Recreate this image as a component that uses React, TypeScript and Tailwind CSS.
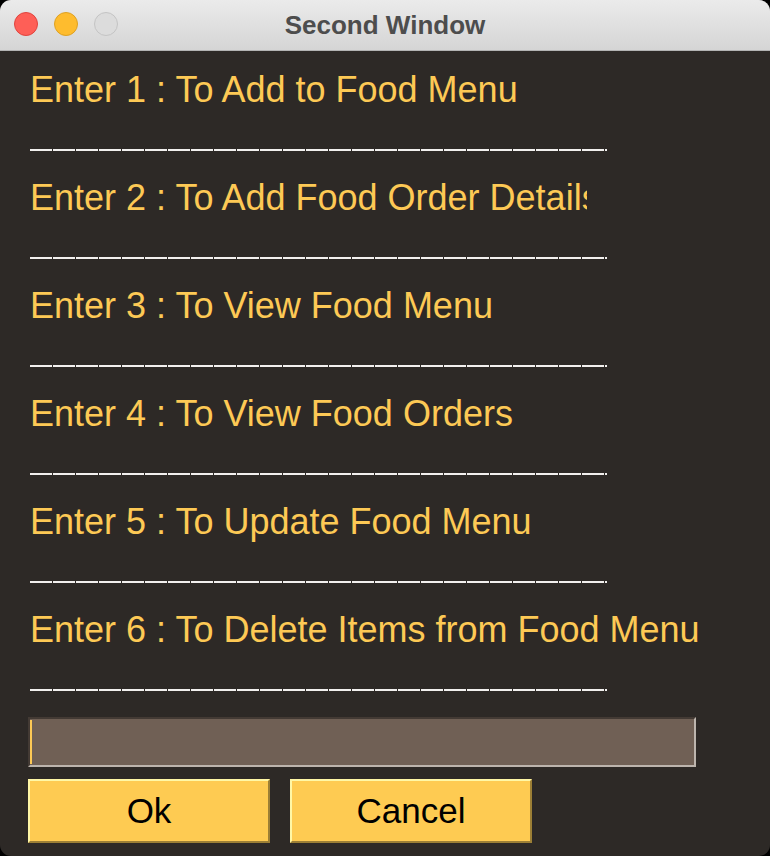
import React from 'react';

const items = [
  'Enter 1 : To Add to Food Menu',
  'Enter 2 : To Add Food Order Details',
  'Enter 3 : To View Food Menu',
  'Enter 4 : To View Food Orders',
  'Enter 5 : To Update Food Menu',
  'Enter 6 : To Delete Items from Food Menu',
];

const Rule: React.FC = () => (
  <div className="mt-[39px] mb-[27px] flex h-[2px] w-[577px] gap-px overflow-hidden">
    {Array.from({ length: 26 }).map((_, i) => (
      <div key={i} className="h-[2px] w-[22px] shrink-0 bg-[#f2f0ee]" />
    ))}
  </div>
);

export default function App() {
  return (
    <div className="h-[856px] w-[770px] bg-black" style={{ fontFamily: '"Liberation Sans", Arial, sans-serif' }}>
      <div className="flex h-full flex-col overflow-hidden rounded-[11px] bg-[#2d2926]">
        {/* Title bar */}
        <div className="relative flex h-[51px] shrink-0 items-center justify-center border-b border-[#b3b3b3] bg-gradient-to-b from-[#ebebeb] to-[#d5d5d5]">
          <div className="absolute left-[14px] top-[12px] flex gap-[16px]">
            <div className="h-[24px] w-[24px] rounded-full border border-[#e0443e] bg-[#fe5f57]" />
            <div className="h-[24px] w-[24px] rounded-full border border-[#dea123] bg-[#febc2e]" />
            <div className="h-[24px] w-[24px] rounded-full border border-[#c4c4c4] bg-[#dcdcdc]" />
          </div>
          <span className="text-[26px] font-bold text-[#4d4d4d]">Second Window</span>
        </div>

        {/* Content */}
        <div className="flex flex-col pl-[30px] pt-[19px]">
          {items.map((t, i) => (
            <div key={i} className="flex flex-col">
              <div
                className={
                  i === 1
                    ? 'h-[40px] w-[557px] overflow-hidden whitespace-nowrap text-[36px] leading-[40px] text-[#fdc955]'
                    : 'h-[40px] whitespace-nowrap text-[36px] leading-[40px] text-[#fdc955]'
                }
              >
                {t}
              </div>
              <Rule />
            </div>
          ))}

          {/* Entry */}
          <div className="-mt-px ml-[-2px] flex h-[50px] w-[668px] border-2 border-t-[#433a34] border-l-[#433a34] border-r-[#bcb4ad] border-b-[#bcb4ad] bg-[#706055] py-px">
            <div className="h-full w-[2px] bg-[#fdc955]" />
          </div>

          {/* Buttons */}
          <div className="ml-[-2px] mt-[12px] flex gap-[20px]">
            <button className="flex h-[64px] w-[242px] items-center justify-center border-2 border-t-[#fff7a6] border-l-[#fff7a6] border-r-[#9c7f35] border-b-[#9c7f35] bg-[#fecb52] text-[35px] text-black">
              Ok
            </button>
            <button className="flex h-[64px] w-[242px] items-center justify-center border-2 border-t-[#fff7a6] border-l-[#fff7a6] border-r-[#9c7f35] border-b-[#9c7f35] bg-[#fecb52] text-[35px] text-black">
              Cancel
            </button>
          </div>
        </div>
      </div>
    </div>
  );
}
